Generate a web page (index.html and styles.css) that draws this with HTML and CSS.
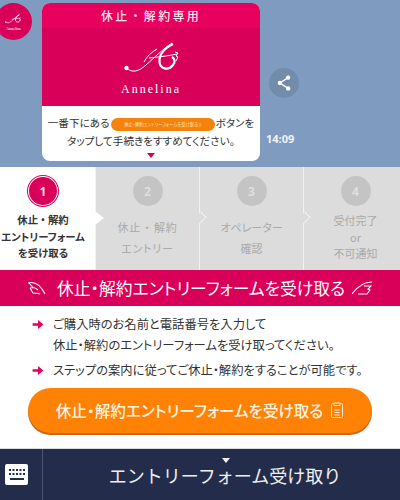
FILE: index.html
```html
<!DOCTYPE html>
<html lang="ja">
<head>
<meta charset="utf-8">
<title>休止・解約専用</title>
<link rel="stylesheet" href="styles.css">
</head>
<body>
<div class="page">
  <section class="chat">
    <div class="avatar">
      <svg class="avatar-logo" viewBox="0 0 60 40"><circle cx="2.500" cy="28" r="2.500" fill="#fff"/><path d="M2.500 28C8 33 14 32 22 25 30 18 40 8 48 3M22 19l31-4" fill="none" stroke="#fff" stroke-width="2"/><path d="M48 5C40 8 34 14 35 22c1 7 9 9 14 3 3-3 2-7-1-8" fill="none" stroke="#fff" stroke-width="3"/></svg>
      <span class="avatar-name">Annelina</span>
    </div>
    <article class="bubble">
      <header class="bubble-head">休止・解約専用</header>
      <div class="bubble-hero">
        <svg class="hero-logo" viewBox="0 0 60 40"><circle cx="2.500" cy="28" r="2.200" fill="#fff"/><path d="M2.500 28C8 33 14 32 22 25 30 18 40 8 48 3M20 22c3-6 8-10 13-13M25 18c9-1 19-2 28-4M51 12l3 1-2 3 2 1-2 4" fill="none" stroke="#fff" stroke-width="1"/><path d="M49 4C41 8 35 14 35.500 22c.5 7 9 9 13.500 3 2.500-3 2-6-1-8" fill="none" stroke="#fff" stroke-width="2.200"/></svg>
        <div class="hero-name">Annelina</div>
      </div>
      <div class="bubble-body">
        <p class="bubble-line">一番下にある<span class="mini-btn">休止・解約エントリーフォームを受け取る ▯</span>ボタンを</p>
        <p class="bubble-line">タップして手続きをすすめてください。</p>
        <div class="down-mark"></div>
      </div>
    </article>
    <div class="side">
      <div class="share">
        <svg viewBox="0 0 24 24" class="share-icon"><path d="M17 5.500 7 12l10 6.500" fill="none" stroke="#fff" stroke-width="1.600"/><circle cx="17" cy="5.500" r="2.600" fill="#fff"/><circle cx="7" cy="12" r="2.600" fill="#fff"/><circle cx="17" cy="18.500" r="2.600" fill="#fff"/></svg>
      </div>
      <time class="time">14:09</time>
    </div>
  </section>

  <ol class="steps">
    <li class="step step-on">
      <span class="num">1</span>
      <span class="step-label">休止 ・ 解約<br>エントリーフォーム<br>を受け取る</span>
    </li>
    <li class="step">
      <span class="num">2</span>
      <span class="step-label tall spaced">休止 ・ 解約<br>エントリー</span>
    </li>
    <li class="step">
      <span class="num">3</span>
      <span class="step-label tall">オペレーター<br>確認</span>
    </li>
    <li class="step">
      <span class="num">4</span>
      <span class="step-label">受付完了<br>or<br>不可通知</span>
    </li>
  </ol>

  <h1 class="banner">
    <svg class="wing wing-l" viewBox="0 0 18 15"><path d="M0 2C7 0 13 5 17 13M1 2l4 4.500-3 .5c3-1 6 0 8 2M2 7l3 5c3 0 5 0 7 1" fill="none" stroke="#fff" stroke-width="1.100"/></svg>
    <span>休止・解約エントリーフォームを受け取る</span>
    <svg class="wing wing-r" viewBox="0 0 20 14"><path d="M0 13C5 6 12 1 20 1M12 5h7l-3 3 2 1-3 4c-3 0-6 0-9 0" fill="none" stroke="#fff" stroke-width="1.100"/></svg>
  </h1>

  <section class="info">
    <ul class="notes">
      <li class="note"><svg class="arrow" viewBox="0 0 12 10"><path d="M0 3.500h6V0l6 5-6 5V6.500H0z" fill="#e5005a"/></svg><p>ご購入時のお名前と電話番号を入力して<br>休止・解約のエントリーフォームを受け取ってください。</p></li>
      <li class="note"><svg class="arrow" viewBox="0 0 12 10"><path d="M0 3.500h6V0l6 5-6 5V6.500H0z" fill="#e5005a"/></svg><p>ステップの案内に従ってご休止・解約をすることが可能です。</p></li>
    </ul>
    <a class="cta">
      <span>休止・解約エントリーフォームを受け取る</span>
      <svg class="doc" viewBox="0 0 14 17"><path d="M4 1.500H2.500a1 1 0 0 0-1 1v12a1 1 0 0 0 1 1h9a1 1 0 0 0 1-1v-12a1 1 0 0 0-1-1H10M4 1h6v2.500H4zM4.500 8h5M4.500 10.500h5M4.500 13h5" fill="none" stroke="#ffe9cf" stroke-width="1"/></svg>
    </a>
  </section>

  <footer class="bar">
    <div class="kbd-cell">
      <svg class="kbd" viewBox="0 0 23 21"><rect width="23" height="21" rx="2" fill="#fff"/><g fill="#232d4b"><rect x="4" y="5" width="2" height="2"/><rect x="7.500" y="5" width="2" height="2"/><rect x="11" y="5" width="2" height="2"/><rect x="14.500" y="5" width="2" height="2"/><rect x="18" y="5" width="2" height="2"/><rect x="4" y="9" width="2" height="2"/><rect x="7.500" y="9" width="2" height="2"/><rect x="11" y="9" width="2" height="2"/><rect x="14.500" y="9" width="2" height="2"/><rect x="18" y="9" width="2" height="2"/><rect x="5" y="14" width="14" height="2"/></g></svg>
    </div>
    <div class="menu">
      <span class="menu-caret"></span>
      <span class="menu-label">エントリーフォーム受け取り</span>
    </div>
  </footer>
</div>
</body>
</html>
```
FILE: styles.css
```css
* { box-sizing: border-box; }
html, body { margin: 0; padding: 0; }
body { width: 400px; height: 500px; overflow: hidden; background: #fff; font-family: "Noto Sans CJK JP", "Noto Sans", sans-serif; font-feature-settings: "palt"; }
.page { display: flex; flex-direction: column; height: 500px; overflow: hidden; }
p, ul, ol, h1 { margin: 0; padding: 0; list-style: none; font-weight: normal; }

.chat { height: 167px; flex: none; background: #7f9cc0; display: flex; align-items: flex-start; padding: 3px 0 0 0; }
.avatar { width: 37px; height: 37px; margin-left: -5px; display: flex; flex: none; flex-direction: column; align-items: center; justify-content: center; background: #d9005a; border-radius: 50%; }
.avatar-logo { width: 18px; height: 13px; }
.avatar-name { font: 4px "Liberation Serif", serif; color: #fff; }
.bubble { width: 218px; height: 158px; margin-left: 10px; border-radius: 8px; overflow: hidden; background: #fff; display: flex; flex-direction: column; flex: none; }
.bubble-head { height: 25px; background: #e8005f; color: #f6e6ee; font-size: 12px; font-weight: 500; letter-spacing: 2.300px; text-align: center; line-height: 26px; font-feature-settings: normal; }
.bubble-hero { height: 78px; background: #d9005a; display: flex; flex-direction: column; align-items: center; padding-top: 12px; }
.hero-logo { width: 60px; height: 40px; margin-left: 6px; }
.hero-name { font: 12px "Liberation Serif", serif; letter-spacing: 2px; color: #fff; margin-top: 2px; }
.bubble-body { flex: 1; display: flex; flex-direction: column; align-items: center; padding-top: 8px; color: #333; }
.bubble-line { font-size: 10.600px; line-height: 18px; white-space: nowrap; }
.mini-btn { display: inline-block; width: 104px; height: 13px; margin: 0 1px; background: #f5820a; color: #ffe6c8; font-size: 4.300px; line-height: 13px; border-radius: 7px; text-align: center; vertical-align: 1px; }
.down-mark { width: 0; height: 0; margin-top: 3px; border: 4px solid transparent; border-top: 5px solid #d9005a; border-bottom: 0; }
.side { width: 40px; margin-left: 6px; display: flex; flex-direction: column; align-items: flex-start; padding-top: 65px; flex: none; }
.share { width: 30px; height: 30px; margin-left: 3px; border-radius: 50%; background: #738cab; display: flex; align-items: center; justify-content: center; }
.share-icon { width: 20px; height: 20px; }
.time { font-size: 11px; font-weight: 700; color: #f0f3f7; margin-top: 35px; line-height: 12px; font-family: "Noto Sans", sans-serif; }

.steps { display: grid; grid-template-columns: 104px 104px 104px 104px; height: 103px; width: 416px; margin-left: -9px; background: #dcdcdc; flex: none; }
.step { position: relative; display: flex; flex-direction: column; align-items: center; padding-top: 9px; color: #aaa; border-left: 1px solid #f2f2f2; }
.step-on { background: #fff; color: #333; border-left: 0; }
.step-on::after { content: ""; position: absolute; right: -9px; top: 44px; border-left: 9px solid #fff; border-top: 7px solid transparent; border-bottom: 7px solid transparent; z-index: 1; }
.step + .step::before { content: ""; position: absolute; left: -4px; top: 46px; width: 8px; height: 8px; border-top: 1px solid #f2f2f2; border-right: 1px solid #f2f2f2; background: #dcdcdc; transform: rotate(45deg) scaleX(.9); }
.step-on + .step::before { display: none; }
.num { width: 30px; height: 30px; border-radius: 50%; background: #c4c4c4; color: #dedede; display: flex; align-items: center; justify-content: center; font: 700 12px "Noto Sans", sans-serif; }
.step-on .num { background: #d9005a; color: #f7d9e5; box-shadow: 0 0 0 1px #fff inset, 0 0 0 1px #d9005a; }
.step-label { display: block; text-align: center; font-size: 11px; line-height: 16.500px; margin-top: 6px; white-space: nowrap; }
.step-on .step-label { font-weight: 700; font-size: 10.400px; }
.tall { margin-top: 11px; line-height: 21px; }
.spaced { letter-spacing: .8px; }

.banner { height: 36px; flex: none; background: #d9005a; color: #fff; display: flex; align-items: center; justify-content: center; font-size: 16.800px; }
.wing { flex: none; }
.wing-l { width: 18px; height: 15px; margin-right: 11px; }
.wing-r { width: 20px; height: 14px; margin-left: 7px; }

.info { flex: 1; display: flex; flex-direction: column; background: #fff; padding: 8px 28px 0 32px; border-bottom: 1px solid #ddd; }
.notes { display: flex; flex-direction: column; gap: 5px; }
.note { display: flex; gap: 9px; font-size: 12.300px; line-height: 20.500px; color: #333; }
.arrow { width: 12px; height: 9px; margin-top: 6px; flex: none; }
.note p { white-space: nowrap; }
.cta { display: flex; align-items: center; justify-content: center; gap: 7px; height: 45px; width: 344px; margin: 7px 0 0 -4px; border-radius: 23px; background: #ff8205; box-shadow: 0 2px 0 #c9651a; color: #fff3e3; font-size: 15.600px; font-weight: 500; }
.doc { width: 14px; height: 17px; }

.bar { height: 51px; flex: none; background: #232d4b; display: flex; }
.kbd-cell { width: 43px; border-right: 1px solid #4b5470; display: flex; align-items: center; padding-left: 5px; }
.kbd { width: 23px; height: 21px; margin-top: -1px; }
.menu { flex: 1; display: flex; flex-direction: column; align-items: center; padding-top: 9px; }
.menu-caret { width: 0; height: 0; border: 4px solid transparent; border-top: 5px solid #f2f2f2; border-bottom: 0; margin-left: 8px; }
.menu-label { color: #f0f0f0; font-size: 18px; line-height: 26px; margin-top: -1px; font-feature-settings: normal; margin-left: 7px; }
```
